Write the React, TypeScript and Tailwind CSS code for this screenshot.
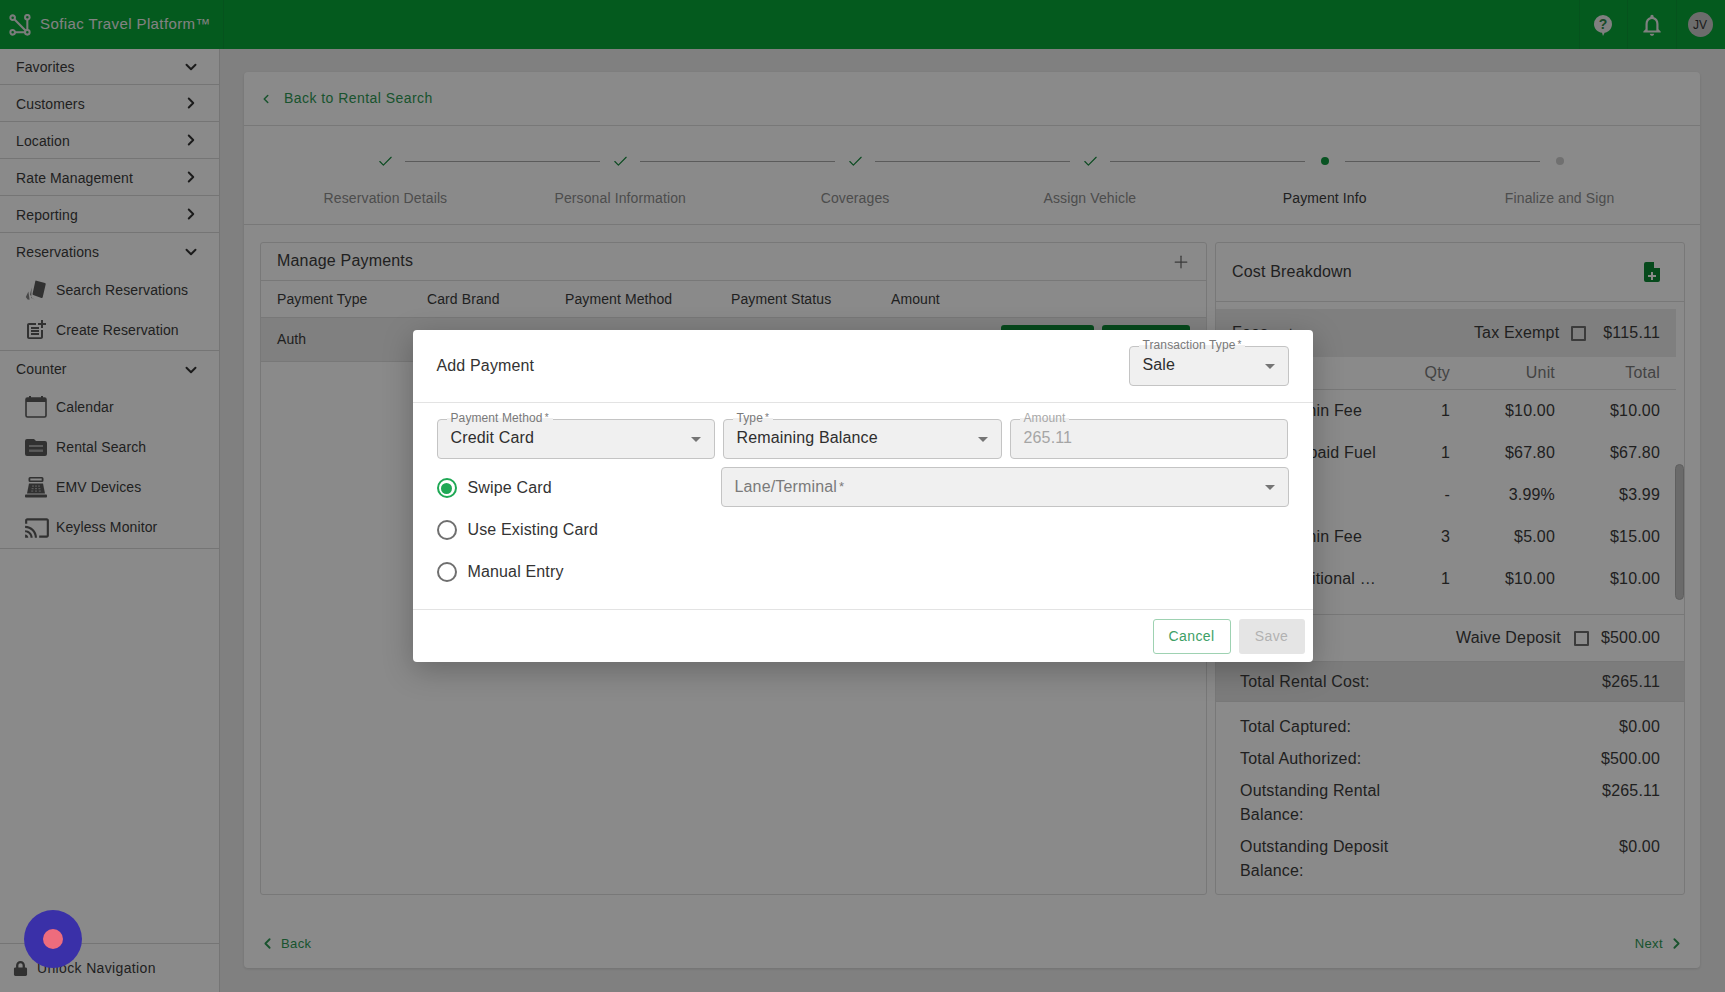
import React from 'react';
import { Check, ChevronDown, ChevronLeft, ChevronRight, Plus } from 'lucide-react';
import { FaLock } from 'react-icons/fa';
import { MdOutlineNotifications } from 'react-icons/md';

const navTop = ['Customers', 'Location', 'Rate Management', 'Reporting'];

const CardsIcon = () => (
  <svg viewBox="0 0 24 24" className="w-[24px] h-[24px]" fill="#5c5c5c">
    <path d="M11.5 2.4 21 5a1 1 0 0 1 .7 1.2l-3 13a1 1 0 0 1-1.3.7l-8.2-3a1 1 0 0 1-.6-1.2l2.8-13a.9.9 0 0 1 1.1-.7z" />
    <path d="M7.6 9.5 6 16.4l2.6 4.4 2.6.6-4-1.4z M4.4 13.5l-2.6 5.4 1.8 2.6 2 .2z" opacity="0.75" />
  </svg>
);

const PostAddIcon = () => (
  <svg viewBox="0 0 24 24" className="w-[24px] h-[24px]" fill="#5c5c5c">
    <path d="M17 19.22H5V7h7V5H5c-1.1 0-2 .9-2 2v12c0 1.1.9 2 2 2h12c1.1 0 2-.9 2-2v-7h-2v7.22z" />
    <path d="M19 2h-2v3h-3c.01.01 0 2 0 2h3v2.99c.01.01 2 0 2 0V7h3V5h-3V2zM7 9h8v2H7zM7 12v2h8v-2h-3zM7 15h8v2H7z" />
  </svg>
);

const CalendarIcon = () => (
  <svg viewBox="0 0 24 24" className="w-[24px] h-[24px]">
    <rect x="2" y="3" width="20" height="19" rx="1.5" fill="none" stroke="#5c5c5c" strokeWidth="1.6" />
    <rect x="2" y="3" width="20" height="4" fill="#5c5c5c" />
    <rect x="5" y="1" width="2" height="3" fill="#5c5c5c" />
    <rect x="17" y="1" width="2" height="3" fill="#5c5c5c" />
  </svg>
);

const FolderIcon = () => (
  <svg viewBox="0 0 24 24" className="w-[24px] h-[24px]" fill="#5c5c5c">
    <path d="M3 4h7l2 2h9a2 2 0 0 1 2 2v11a2 2 0 0 1-2 2H3a2 2 0 0 1-2-2V6a2 2 0 0 1 2-2z" />
    <rect x="5" y="10" width="14" height="2" fill="#a8a8a8" />
    <rect x="5" y="14.5" width="14" height="2.4" fill="#a8a8a8" />
  </svg>
);

const RegisterIcon = () => (
  <svg viewBox="0 0 24 24" className="w-[24px] h-[24px]" fill="#5c5c5c">
    <path d="M6 2h12a1.5 1.5 0 0 1 1.5 1.5v2A1.5 1.5 0 0 1 18 7H6a1.5 1.5 0 0 1-1.5-1.5v-2A1.5 1.5 0 0 1 6 2zm.3 1.6v1.8h11.4V3.6z" />
    <path d="M5 8.5h14l2 10H3z" />
    <rect x="1" y="19.5" width="22" height="3" rx="0.8" />
    <g fill="#a8a8a8">
      <rect x="8" y="10.5" width="2" height="1.2" /><rect x="11" y="10.5" width="2" height="1.2" /><rect x="14" y="10.5" width="2" height="1.2" />
      <rect x="7.6" y="13" width="2" height="1.2" /><rect x="11" y="13" width="2" height="1.2" /><rect x="14.4" y="13" width="2" height="1.2" />
      <rect x="7.2" y="15.5" width="2" height="1.2" /><rect x="11" y="15.5" width="2" height="1.2" /><rect x="14.8" y="15.5" width="2" height="1.2" />
    </g>
  </svg>
);

const CastIcon = () => (
  <svg viewBox="0 0 24 24" className="w-[26px] h-[26px]" fill="#5c5c5c">
    <path d="M21 3H3c-1.1 0-2 .9-2 2v3h2V5h18v14h-7v2h7c1.1 0 2-.9 2-2V5c0-1.1-.9-2-2-2zM1 18v3h3c0-1.66-1.34-3-3-3zm0-4v2c2.76 0 5 2.24 5 5h2c0-3.87-3.13-7-7-7zm0-4v2c4.97 0 9 4.03 9 9h2c0-6.08-4.93-11-11-11z" />
  </svg>
);

const LogoIcon = () => (
  <svg viewBox="0 0 24 24" className="w-[22px] h-[22px]" fill="none" stroke="#e6e6e6" strokeWidth="2.2">
    <circle cx="4" cy="4" r="2.5" />
    <circle cx="20" cy="3.5" r="2.5" />
    <circle cx="4" cy="20" r="2.5" />
    <circle cx="20" cy="20" r="2.5" />
    <path d="M5.8 5.8 18 18M20 6v11.5M6.5 20H17.5" />
  </svg>
);

const HelpIcon = () => (
  <svg viewBox="0 0 24 24" className="w-[24px] h-[24px]">
    <path d="M12 2a9 9 0 0 1 9 9c0 4.6-3.4 8.2-7.4 8.8L12 23l-1-3.2C6.6 19.2 3 15.6 3 11a9 9 0 0 1 9-9z" fill="#ececec" />
    <text x="12" y="16" textAnchor="middle" fontSize="14" fontWeight="700" fill="#2f8a4d">?</text>
  </svg>
);

const FileAddIcon = () => (
  <svg viewBox="0 0 16 20" className="w-[16px] h-[20px]">
    <path d="M2 0h8v6h6v12a2 2 0 0 1-2 2H2a2 2 0 0 1-2-2V2a2 2 0 0 1 2-2z" fill="#0c8a35" />
    <path d="M11.5 0 16 4.6h-4.5z" fill="#ffffff" opacity="0.6" />
    <path d="M7 10h2v3h3v2H9v3H7v-3H4v-2h3z" fill="#ffffff" />
  </svg>
);

const CheckBox = () => (
  <span className="block w-[15px] h-[15px] border-2 border-[#6e6e6e] rounded-[1px]" />
);

const NavRow = ({ label, open, border = true, h = 'h-[37px]', textClass = '' }: {
  label: string; open?: boolean; border?: boolean; h?: string; textClass?: string;
}) => (
  <div className={`${h} flex items-center justify-between pl-[16px] pr-[19px] pt-[1px] shrink-0 ${border ? 'border-b border-[#d8d8d8]' : ''}`}>
    <span className={textClass}>{label}</span>
    {open ? (
      <ChevronDown size={18} strokeWidth={2.6} className="text-[#333333]" />
    ) : (
      <ChevronRight size={18} strokeWidth={2.6} className="text-[#333333] -mt-[1px]" />
    )}
  </div>
);

const NavItem = ({ icon, label, h = 'h-[40px]' }: { icon: React.ReactNode; label: string; h?: string }) => (
  <div className={`${h} flex items-center pl-[24px] shrink-0`}>
    <span className="w-[32px] flex items-center">{icon}</span>
    <span>{label}</span>
  </div>
);

const Sidebar = () => (
  <aside className="w-[220px] shrink-0 bg-white border-r border-[#d8d8d8] flex flex-col text-[14px] text-[#3c3c3c] tracking-[0.12px]">
    <NavRow label="Favorites" open h="h-[36px]" />
    {navTop.map(n => <NavRow key={n} label={n} textClass="mt-[1px]" />)}
    <NavRow label="Reservations" open border={false} />
    <NavItem icon={<CardsIcon />} label="Search Reservations" />
    <NavItem icon={<PostAddIcon />} label="Create Reservation" />
    <div className="border-b border-[#d8d8d8]" />
    <NavRow label="Counter" open border={false} h="h-[36px]" />
    <NavItem icon={<CalendarIcon />} label="Calendar" />
    <NavItem icon={<FolderIcon />} label="Rental Search" />
    <NavItem icon={<RegisterIcon />} label="EMV Devices" />
    <NavItem icon={<CastIcon />} label="Keyless Monitor" h="h-[41px]" />
    <div className="border-b border-[#d8d8d8]" />
    <div className="flex-1" />
    <div className="h-[49px] border-t border-[#d8d8d8] flex items-center pl-[13px] pt-[1px] shrink-0 tracking-[0.35px]">
      <FaLock size={15} color="#5c5c5c" />
      <span className="ml-[9px]">Unlock Navigation</span>
    </div>
  </aside>
);

const steps = [
  { label: 'Reservation Details', state: 'done' },
  { label: 'Personal Information', state: 'done' },
  { label: 'Coverages', state: 'done' },
  { label: 'Assign Vehicle', state: 'done' },
  { label: 'Payment Info', state: 'active' },
  { label: 'Finalize and Sign', state: 'todo' },
];

const Stepper = () => (
  <div className="h-[99px] border-b border-[#dedede] shrink-0 pl-[24px] pr-[23px] pt-[25px]">
    <div className="flex items-center h-[20px] pl-[97px] pr-[97px]">
      {steps.map((s, i) => (
        <React.Fragment key={s.label}>
          <span className="w-[40px] flex justify-center shrink-0">
            {s.state === 'done' && <Check size={17} strokeWidth={1.6} className="text-[#12893b]" />}
            {s.state === 'active' && <span className="block w-[8px] h-[8px] rounded-full bg-[#0f9a3f]" />}
            {s.state === 'todo' && <span className="block w-[8px] h-[8px] rounded-full bg-[#cfcfcf]" />}
          </span>
          {i < steps.length - 1 && <span className="flex-1 h-px bg-[#a8a8a8]" />}
        </React.Fragment>
      ))}
    </div>
    <div className="grid grid-cols-6 mt-[17px] text-[14px] tracking-[0.12px]">
      {steps.map(s => (
        <span key={s.label} className={`text-center ${s.state === 'active' ? 'text-[#3c3c3c]' : 'text-[#8e8e8e]'}`}>
          {s.label}
        </span>
      ))}
    </div>
  </div>
);

const ManagePayments = () => (
  <section className="w-[947px] shrink-0 border border-[#dedede] rounded-[3px] flex flex-col">
    <div className="h-[38px] flex items-center justify-between pl-[16px] pr-[15px] border-b border-[#dedede] text-[16px] text-[#3c3c3c] tracking-[0.18px] shrink-0">
      <span className="-mt-[2px]">Manage Payments</span>
      <Plus size={20} strokeWidth={1.5} className="text-[#6c6c6c]" />
    </div>
    <div className="h-[37px] flex items-center pl-[16px] border-b border-[#dedede] text-[14px] text-[#3c3c3c] tracking-[0.1px] shrink-0">
      <span className="w-[150px]">Payment Type</span>
      <span className="w-[138px]">Card Brand</span>
      <span className="w-[166px]">Payment Method</span>
      <span className="w-[160px]">Payment Status</span>
      <span>Amount</span>
    </div>
    <div className="h-[44px] flex items-center pl-[16px] pr-[16px] bg-[#ececec] border-b border-[#dedede] text-[14px] text-[#3c3c3c] tracking-[0.1px] shrink-0">
      <span className="flex-1">Auth</span>
      <span className="w-[93px] h-[30px] rounded-[3px] bg-[#0c8a35] mr-[8px]" />
      <span className="w-[88px] h-[30px] rounded-[3px] bg-[#0c8a35]" />
    </div>
  </section>
);

const fees = [
  ['Admin Fee', '1', '$10.00', '$10.00'],
  ['Prepaid Fuel', '1', '$67.80', '$67.80'],
  ['Tax', '-', '3.99%', '$3.99'],
  ['Admin Fee', '3', '$5.00', '$15.00'],
  ['Additional Driver', '1', '$10.00', '$10.00'],
  ['', '', '', '$5.00'],
];

const totals = [
  ['Total Captured:', '$0.00'],
  ['Total Authorized:', '$500.00'],
  ['Outstanding Rental Balance:', '$265.11'],
  ['Outstanding Deposit Balance:', '$0.00'],
];

const CostBreakdown = () => (
  <section className="w-[470px] shrink-0 border border-[#dedede] rounded-[3px] flex flex-col text-[16px] text-[#3c3c3c] tracking-[0.18px]">
    <div className="h-[59px] flex items-center justify-between pl-[16px] pr-[24px] border-b border-[#dedede] shrink-0">
      <span>Cost Breakdown</span>
      <FileAddIcon />
    </div>
    <div className="relative h-[312px] overflow-hidden pt-[7px] pr-[8px] shrink-0">
      <div className="h-[48px] flex items-center justify-end bg-[#ebebeb] pl-[16px] pr-[16px] relative">
        <span className="absolute left-[16px]">Fees</span>
        <span className="absolute left-[70px]">+</span>
        <span>Tax Exempt</span>
        <span className="ml-[12px] mr-[17px]"><CheckBox /></span>
        <span>$115.11</span>
      </div>
      <div className="h-[33px] flex items-center border-b border-[#dedede] pl-[67px] pr-[16px] text-[#7c7c7c]">
        <span className="flex-1 text-right">Qty</span>
        <span className="w-[105px] text-right">Unit</span>
        <span className="w-[105px] text-right">Total</span>
      </div>
      {fees.map((f, i) => (
        <div key={i} className="h-[42px] flex items-center pl-[67px] pr-[16px]">
          <span className="w-[96px] truncate">{f[0]}</span>
          <span className="flex-1 text-right">{f[1]}</span>
          <span className="w-[105px] text-right">{f[2]}</span>
          <span className="w-[105px] text-right">{f[3]}</span>
        </div>
      ))}
      <span className="absolute right-0 top-[162px] w-[9px] h-[136px] rounded-full bg-[#c4c4c4] border border-[#b0b0b0]" />
    </div>
    <div className="h-[48px] flex items-center justify-end border-y border-[#dedede] pr-[24px] shrink-0">
      <span>Waive Deposit</span>
      <span className="ml-[13px] mr-[12px]"><CheckBox /></span>
      <span>$500.00</span>
    </div>
    <div className="h-[40px] flex items-center justify-between pl-[24px] pr-[24px] bg-[#e6e6e6] border-b border-[#dedede] shrink-0">
      <span>Total Rental Cost:</span>
      <span>$265.11</span>
    </div>
    <div className="flex flex-col gap-[8px] pt-[13px] pl-[24px] pr-[24px]">
      {totals.map(t => (
        <div key={t[0]} className="flex justify-between leading-[24px]">
          <span className="w-[190px]">{t[0]}</span>
          <span>{t[1]}</span>
        </div>
      ))}
    </div>
  </section>
);

const Asterisk = ({ big }: { big?: boolean }) => (
  <sup className={`ml-[2px] top-[-1px] leading-none ${big ? 'text-[13px]' : 'text-[10px]'}`}>*</sup>
);

const Field = ({ label, required = true, value, muted, arrow = true, className }: {
  label: string; required?: boolean; value: string; muted?: boolean; arrow?: boolean; className: string;
}) => (
  <div className={`relative h-[40px] bg-[#f0f0f0] border border-[#c4c4c4] rounded-[4px] flex items-center justify-between pl-[13px] pr-[13px] ${className}`}>
    <span className="absolute left-[9px] -top-[9px] px-[4px] text-[12px] leading-[14px] tracking-[0.1px] text-[#7a7a7a] bg-gradient-to-b from-white from-50% to-[#f0f0f0] to-50%">
      <span className={muted ? 'text-[#a8a8a8]' : ''}>{label}</span>
      {required && <Asterisk />}
    </span>
    <span className={`text-[16px] tracking-[0.15px] mt-[-3px] ${muted ? 'text-[#a5a5a5]' : 'text-[#2e2e2e]'}`}>{value}</span>
    {arrow && <span className="w-0 h-0 border-x-[5px] border-x-transparent border-t-[5px] border-t-[#757575] mt-[1px]" />}
  </div>
);

const Radio = ({ label, on }: { label: string; on?: boolean }) => (
  <label className="h-[42px] flex items-center">
    <span className={`w-[20px] h-[20px] rounded-full border-2 flex items-center justify-center ${on ? 'border-[#1fa855]' : 'border-[#6f6f6f]'}`}>
      {on && <span className="block w-[11px] h-[11px] rounded-full bg-[#1fa855]" />}
    </span>
    <span className="ml-[11px] text-[16px] text-[#333333] tracking-[0.15px]">{label}</span>
  </label>
);

const AddPaymentModal = () => (
  <div className="absolute inset-0 bg-black/[0.46] flex items-center justify-center">
    <div className="w-[900px] h-[332px] bg-white rounded-[4px] shadow-[0_8px_30px_rgba(0,0,0,0.25)] flex flex-col">
      <div className="h-[73px] flex items-center justify-between pl-[24px] pr-[24px] border-b border-[#e3e3e3] shrink-0">
        <span className="text-[16px] text-[#333333] tracking-[0.15px]">Add Payment</span>
        <Field label="Transaction Type" value="Sale" className="w-[160px]" />
      </div>
      <div className="flex-1 pt-[16px] pl-[24px] pr-[25px]">
        <div className="flex gap-[8px]">
          <Field label="Payment Method" value="Credit Card" className="w-[278px]" />
          <Field label="Type" value="Remaining Balance" className="w-[279px]" />
          <Field label="Amount" required={false} value="265.11" muted arrow={false} className="w-[278px]" />
        </div>
        <div className="flex mt-[8px]">
          <div className="w-[284px] shrink-0 flex flex-col">
            <Radio label="Swipe Card" on />
            <Radio label="Use Existing Card" />
            <Radio label="Manual Entry" />
          </div>
          <div className="relative h-[40px] flex-1 mr-[-1px] bg-[#f0f0f0] border border-[#c4c4c4] rounded-[4px] flex items-center justify-between pl-[13px] pr-[13px]">
            <span className="text-[16px] text-[#7a7a7a] tracking-[0.15px]">Lane/Terminal<Asterisk big /></span>
            <span className="w-0 h-0 border-x-[5px] border-x-transparent border-t-[5px] border-t-[#757575]" />
          </div>
        </div>
      </div>
      <div className="h-[53px] flex items-center justify-end gap-[8px] pr-[8px] border-t border-[#e3e3e3] shrink-0">
        <button className="w-[78px] h-[35px] border border-[#9ed2b2] rounded-[3px] text-[14px] text-[#3da066] tracking-[0.4px]">Cancel</button>
        <button className="w-[66px] h-[35px] bg-[#e5e5e5] rounded-[3px] text-[14px] text-[#b2b2b2] tracking-[0.4px]">Save</button>
      </div>
    </div>
  </div>
);

export default function App() {
  return (
    <div className="relative h-[992px] w-[1725px] overflow-hidden flex flex-col bg-[#ededed] [font-family:'Liberation_Sans',Arial,sans-serif]">
      <header className="h-[49px] shrink-0 bg-[#09a739] flex items-center text-white">
        <div className="w-[224px] h-full flex items-center pl-[9px] border-r border-[#0a9936] shrink-0">
          <LogoIcon />
          <span className="ml-[9px] text-[15px] tracking-[0.4px] text-[#f0f0f0]">Sofiac Travel Platform™</span>
        </div>
        <div className="flex-1" />
        <div className="w-[48px] h-full flex items-center justify-center pr-[2px] border-l border-[#0a9936]"><HelpIcon /></div>
        <div className="w-[49px] h-full flex items-center justify-center border-l border-[#0a9936]"><MdOutlineNotifications size={26} color="#ececec" /></div>
        <div className="w-[49px] h-full flex items-center justify-center pr-[2px] border-l border-[#0a9936]">
          <span className="w-[25px] h-[25px] rounded-full bg-[#c8c8c8] text-[#333333] text-[12px] flex items-center justify-center">JV</span>
        </div>
      </header>
      <div className="flex-1 flex min-h-0">
        <Sidebar />
        <main className="flex-1 min-w-0 pt-[23px] pb-[24px] pl-[24px] pr-[25px]">
          <div className="h-full bg-white rounded-[4px] shadow-[0_1px_3px_rgba(0,0,0,0.12)] flex flex-col">
            <div className="h-[54px] shrink-0 flex items-center pl-[15px] border-b border-[#dedede] text-[14px] text-[#2f9a55] tracking-[0.45px]">
              <ChevronLeft size={14} strokeWidth={2.6} />
              <span className="ml-[11px]">Back to Rental Search</span>
            </div>
            <Stepper />
            <div className="flex-1 min-h-0 flex gap-[8px] pt-[17px] pl-[16px]">
              <ManagePayments />
              <CostBreakdown />
            </div>
            <div className="h-[73px] shrink-0 flex items-center justify-between pl-[15px] pr-[15px] pt-[24px] text-[13px] text-[#2f9a55] tracking-[0.4px]">
              <span className="flex items-center gap-[5px]"><ChevronLeft size={17} strokeWidth={2.6} />Back</span>
              <span className="flex items-center gap-[5px]">Next<ChevronRight size={17} strokeWidth={2.6} /></span>
            </div>
          </div>
        </main>
      </div>
      <AddPaymentModal />
      <button className="absolute left-[24px] top-[910px] w-[58px] h-[58px] rounded-full bg-[#3a30a8] flex items-center justify-center">
        <span className="block w-[20px] h-[20px] rounded-full bg-[#ee6c7d]" />
      </button>
    </div>
  );
}
